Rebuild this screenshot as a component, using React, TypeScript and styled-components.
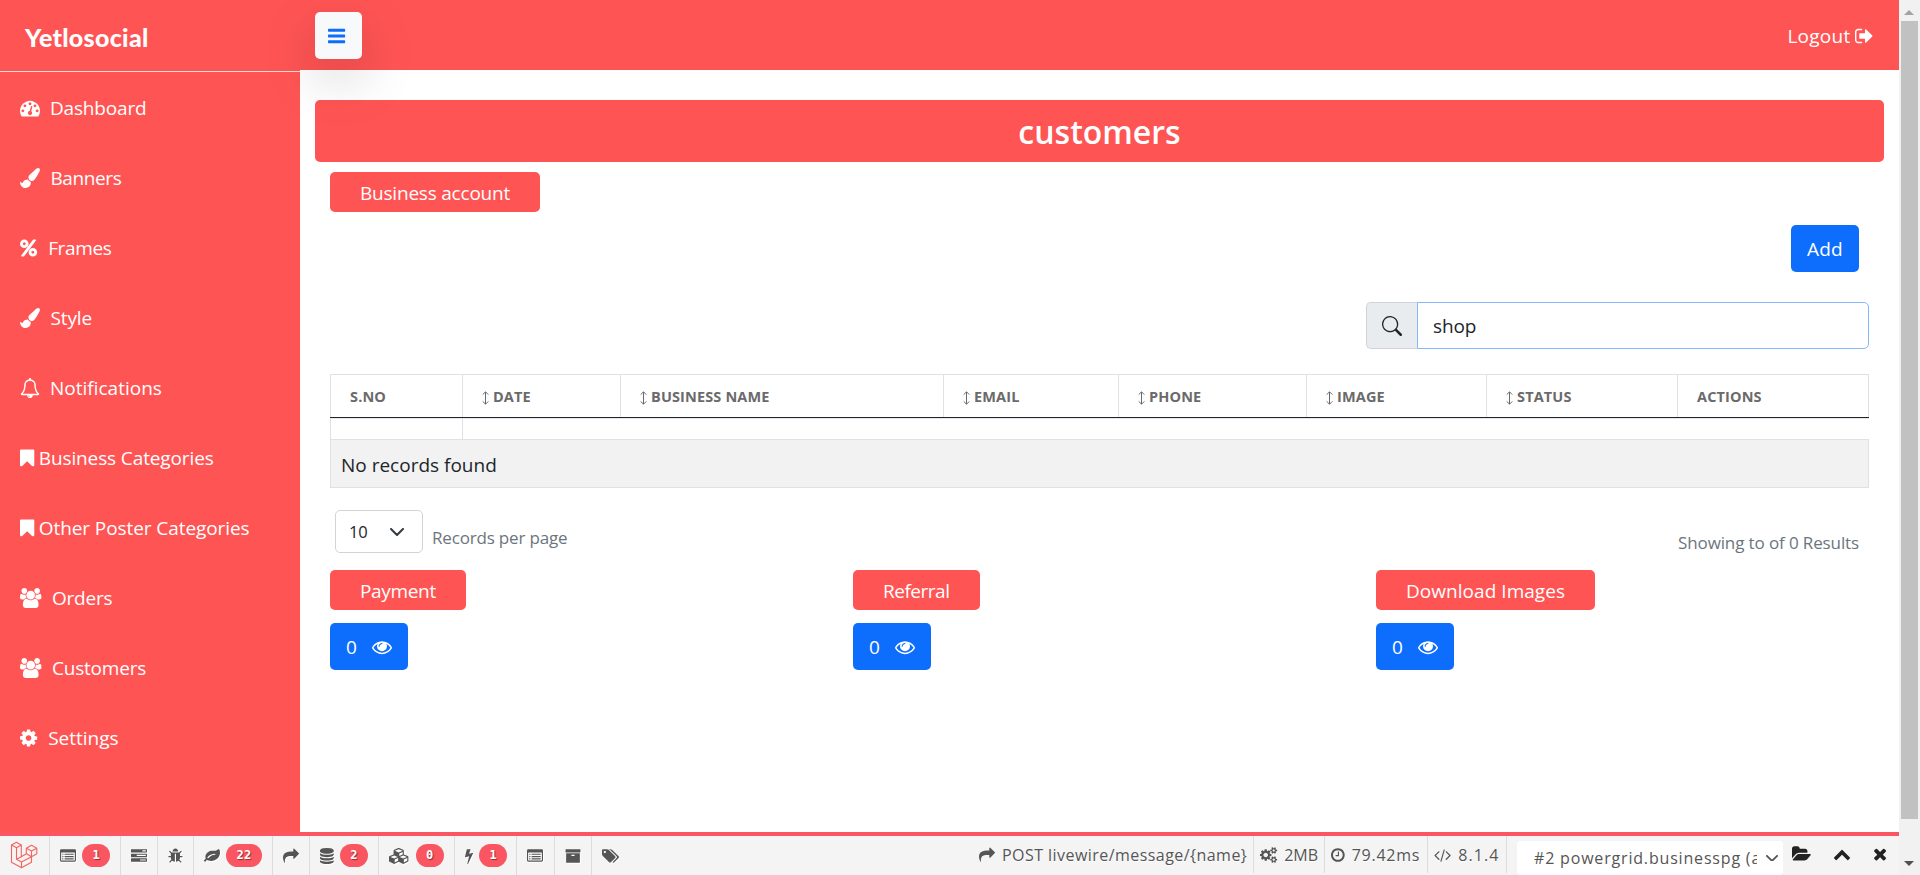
import React from "react";
import styled, { createGlobalStyle } from "styled-components";

const RED = "#ff5454";
const BLUE = "#0d6efd";
const LINE = "#dee2e6";
const SANS = '"Open Sans", "Noto Sans", sans-serif';

const GlobalStyle = createGlobalStyle`
  *, *::before, *::after { box-sizing: border-box; }
  html, body { margin: 0; padding: 0; overflow: hidden; background: #fff; }
  body { font-family: ${SANS}; font-size: 19px; line-height: 30px; color: #212529; }
  button, input { font: inherit; letter-spacing: inherit; }
`;

/* ---------- icons ---------- */

type Glyph = { x?: number; w: number; d: string };

const REPEAT_BOX = "q0-13 9.5-22.5t22.5-9.5h960q13 0 22.5 9.5t9.5 22.5z";

const glyphs = {
  bars: {
    x: 128,
    w: 1536,
    d: "M1664 1344v128q0 26-19 45t-45 19h-1408q-26 0-45-19t-19-45v-128q0-26 19-45t45-19h1408q26 0 45 19t19 45zm0-512v128q0 26-19 45t-45 19h-1408q-26 0-45-19t-19-45v-128q0-26 19-45t45-19h1408q26 0 45 19t19 45zm0-512v128q0 26-19 45t-45 19h-1408q-26 0-45-19t-19-45v-128q0-26 19-45t45-19h1408q26 0 45 19t19 45z",
  },
  dashboard: {
    w: 1792,
    d: "M384 1152q0-53-37.5-90.5t-90.5-37.5-90.5 37.5-37.5 90.5 37.5 90.5 90.5 37.5 90.5-37.5 37.5-90.5zm192-448q0-53-37.5-90.5t-90.5-37.5-90.5 37.5-37.5 90.5 37.5 90.5 90.5 37.5 90.5-37.5 37.5-90.5zm428 481l101-382q6-26-7.5-48.5t-38.5-29.5-48 6.5-30 39.5l-101 382q-60 5-107 43.5t-63 98.5q-20 77 20 146t117 89 146-20 89-117q16-60-6-117t-72-91zm660-33q0-53-37.5-90.5t-90.5-37.5-90.5 37.5-37.5 90.5 37.5 90.5 90.5 37.5 90.5-37.5 37.5-90.5zm-640-640q0-53-37.5-90.5t-90.5-37.5-90.5 37.5-37.5 90.5 37.5 90.5 90.5 37.5 90.5-37.5 37.5-90.5zm448 192q0-53-37.5-90.5t-90.5-37.5-90.5 37.5-37.5 90.5 37.5 90.5 90.5 37.5 90.5-37.5 37.5-90.5zm320 448q0 261-141 483-19 29-54 29h-1402q-35 0-54-29-141-221-141-483 0-182 71-348t191-286 286-191 348-71 348 71 286 191 191 286 71 348z",
  },
  brush: {
    w: 1792,
    d: "M1615 0q70 0 122.5 46.5t52.5 116.5q0 63-45 151-332 629-465 752-97 91-218 91-126 0-216.5-92.5t-90.5-219.5q0-128 92-212l638-579q59-54 130-54zm-909 1034q39 76 106.5 130t150.5 76l1 71q4 213-129.5 347t-348.5 134q-123 0-218-46.5t-152.5-127.5-86.5-183-29-220q7 5 41 30t62 44.5 59 36.5 46 17q41 0 55-37 25-66 57.5-112.5t69.5-76 88-47.5 103-25.5 125-10.5z",
  },
  percent: {
    w: 1536,
    d: "M1280 1280q0-52-38-90t-90-38-90 38-38 90 38 90 90 38 90-38 38-90zm-768-768q0-52-38-90t-90-38-90 38-38 90 38 90 90 38 90-38 38-90zm1024 768q0 159-112.5 271.5t-271.5 112.5-271.5-112.5-112.5-271.5 112.5-271.5 271.5-112.5 271.5 112.5 112.5 271.5zm-96-1088q0 20-13 38l-1056 1408q-19 26-51 26h-160q-26 0-45-19t-19-45q0-20 13-38l1056-1408q19-26 51-26h160q26 0 45 19t19 45zm-672 320q0 159-112.5 271.5t-271.5 112.5-271.5-112.5-112.5-271.5 112.5-271.5 271.5-112.5 271.5 112.5 112.5 271.5z",
  },
  bell: {
    w: 1792,
    d: "M912 1696q0-16-16-16-59 0-101.5-42.5t-42.5-101.5q0-16-16-16t-16 16q0 73 51.5 124.5t124.5 51.5q16 0 16-16zm-666-288h1300q-266-300-266-832 0-51-24-105t-69-103-121.5-80.5-169.5-31.5-169.5 31.5-121.5 80.5-69 103-24 105q0 532-266 832zm1482 0q0 52-38 90t-90 38h-448q0 106-75 181t-181 75-181-75-75-181h-448q-52 0-90-38t-38-90q50-42 91-88t85-119.5 74.5-158.5 50-206 19.5-260q0-152 117-282.5t307-158.5q-8-19-8-39 0-40 28-68t68-28 68 28 28 68q0 20-8 39 190 28 307 158.5t117 282.5q0 139 19.5 260t50 206 74.5 158.5 85 119.5 91 88z",
  },
  bookmark: {
    x: 256,
    w: 1280,
    d: "M1420 128q23 0 44 9 33 13 52.5 41t19.5 62v1289q0 34-19.5 62t-52.5 41q-19 8-44 8-48 0-83-32l-441-424-441 424q-36 33-83 33-23 0-44-9-33-13-52.5-41t-19.5-62v-1289q0-34 19.5-62t52.5-41q21-9 44-9h1048z",
  },
  users: {
    w: 1920,
    d: "M593 896q-162 5-265 128h-134q-82 0-138-40.5t-56-118.5q0-353 124-353 6 0 43.5 21t97.5 42.5 119 21.5q67 0 133-23-5 37-5 66 0 139 81 256zm1071 637q0 120-73 189.5t-194 69.5h-874q-121 0-194-69.5t-73-189.5q0-53 3.5-103.5t14-109 26.5-108.5 43-97.5 62-81 85.5-53.5 111.5-20q10 0 43 21.5t73 48 107 48 135 21.5 135-21.5 107-48 73-48 43-21.5q61 0 111.5 20t85.5 53.5 62 81 43 97.5 26.5 108.5 14 109 3.5 103.5zm-1024-1277q0 106-75 181t-181 75-181-75-75-181 75-181 181-75 181 75 75 181zm704 384q0 159-112.5 271.5t-271.5 112.5-271.5-112.5-112.5-271.5 112.5-271.5 271.5-112.5 271.5 112.5 112.5 271.5zm576 225q0 78-56 118.5t-138 40.5h-134q-103-123-265-128 81-117 81-256 0-29-5-66 66 23 133 23 59 0 119-21.5t97.5-42.5 43.5-21q124 0 124 353zm-128-609q0 106-75 181t-181 75-181-75-75-181 75-181 181-75 181 75 75 181z",
  },
  cog: {
    x: 128,
    w: 1536,
    d: "M1152 896q0-106-75-181t-181-75-181 75-75 181 75 181 181 75 181-75 75-181zm512-109v222q0 12-8 23t-20 13l-185 28q-19 54-39 91 35 50 107 138 10 12 10 25t-9 23q-27 37-99 108t-94 71q-12 0-26-9l-138-108q-44 23-91 38-16 136-29 186-7 28-36 28h-222q-14 0-24.5-8.5t-11.5-21.5l-28-184q-49-16-90-37l-141 107q-10 9-25 9-14 0-25-11-126-114-165-168-7-10-7-23 0-12 8-23 15-21 51-66.5t54-70.5q-27-50-41-99l-183-27q-13-2-21-12.5t-8-23.5v-222q0-12 8-23t19-13l186-28q14-46 39-92-40-57-107-138-10-12-10-24 0-10 9-23 26-36 98.5-107.5t94.5-71.5q13 0 26 10l138 107q44-23 91-38 16-136 29-186 7-28 36-28h222q14 0 24.5 8.5t11.5 21.5l28 184q49 16 90 37l142-107q9-9 24-9 13 0 25 10 129 119 165 170 7 8 7 22 0 12-8 23-15 21-51 66.5t-54 70.5q26 50 41 98l183 28q13 2 21 12.5t8 23.5z",
  },
  signOut: {
    x: 64,
    w: 1664,
    d: "M704 1440q0 4 1 20t.5 26.5-3 23.5-10 19.5-20.5 6.5h-320q-119 0-203.5-84.5t-84.5-203.5v-704q0-119 84.5-203.5t203.5-84.5h320q13 0 22.5 9.5t9.5 22.5q0 4 1 20t.5 26.5-3 23.5-10 19.5-20.5 6.5h-320q-66 0-113 47t-47 113v704q0 66 47 113t113 47h312l11.5 1 11.5 3 8 5.5 7 9 2 13.5zm928-544q0 26-19 45l-544 544q-19 19-45 19t-45-19-19-45v-288h-448q-26 0-45-19t-19-45v-384q0-26 19-45t45-19h448v-288q0-26 19-45t45-19 45 19l544 544q19 19 19 45z",
  },
  eye: {
    w: 1792,
    d: "M1664 960q-152-236-381-353 61 104 61 225 0 185-131.5 316.5t-316.5 131.5-316.5-131.5-131.5-316.5q0-121 61-225-229 117-381 353 133 205 333.5 326.5t434.5 121.5 434.5-121.5 333.5-326.5zm-720-384q0-20-14-34t-34-14q-125 0-214.5 89.5t-89.5 214.5q0 20 14 34t34 14 34-14 14-34q0-86 61-147t147-61q20 0 34-14t14-34zm848 384q0 34-20 69-140 230-376.5 368.5t-499.5 138.5-499.5-139-376.5-368q-20-35-20-69t20-69q140-229 376.5-368t499.5-139 499.5 139 376.5 368q20 35 20 69z",
  },
  listAlt: {
    w: 1792,
    d: `M384 1184v64q0 13-9.5 22.5t-22.5 9.5h-64q-13 0-22.5-9.5t-9.5-22.5v-64q0-13 9.5-22.5t22.5-9.5h64q13 0 22.5 9.5t9.5 22.5zm0-256v64q0 13-9.5 22.5t-22.5 9.5h-64q-13 0-22.5-9.5t-9.5-22.5v-64q0-13 9.5-22.5t22.5-9.5h64q13 0 22.5 9.5t9.5 22.5zm0-256v64q0 13-9.5 22.5t-22.5 9.5h-64q-13 0-22.5-9.5t-9.5-22.5v-64q0-13 9.5-22.5t22.5-9.5h64q13 0 22.5 9.5t9.5 22.5zm1152 512v64q0 13-9.5 22.5t-22.5 9.5h-960q-13 0-22.5-9.5t-9.5-22.5v-64${REPEAT_BOX}m0-256v64q0 13-9.5 22.5t-22.5 9.5h-960q-13 0-22.5-9.5t-9.5-22.5v-64${REPEAT_BOX}m0-256v64q0 13-9.5 22.5t-22.5 9.5h-960q-13 0-22.5-9.5t-9.5-22.5v-64${REPEAT_BOX}m128 704v-832q0-13-9.5-22.5t-22.5-9.5h-1472q-13 0-22.5 9.5t-9.5 22.5v832q0 13 9.5 22.5t22.5 9.5h1472q13 0 22.5-9.5t9.5-22.5zm128-1088v1088q0 66-47 113t-113 47h-1472q-66 0-113-47t-47-113v-1088q0-66 47-113t113-47h1472q66 0 113 47t47 113z`,
  },
  tasks: {
    w: 1792,
    d: "M1024 1408h640v-128h-640v128zm-384-512h1024v-128h-1024v128zm640-512h384v-128h-384v128zm512 832v256q0 26-19 45t-45 19h-1664q-26 0-45-19t-19-45v-256q0-26 19-45t45-19h1664q26 0 45 19t19 45zm0-512v256q0 26-19 45t-45 19h-1664q-26 0-45-19t-19-45v-256q0-26 19-45t45-19h1664q26 0 45 19t19 45zm0-512v256q0 26-19 45t-45 19h-1664q-26 0-45-19t-19-45v-256q0-26 19-45t45-19h1664q26 0 45 19t19 45z",
  },
  bug: {
    x: 64,
    w: 1664,
    d: "M1696 960q0 26-19 45t-45 19h-224q0 171-67 290l208 209q19 19 19 45t-19 45q-18 19-45 19t-45-19l-198-197q-5 5-15 13t-42 28.5-65 36.5-82 29-97 13v-896h-128v896q-51 0-101.5-13.5t-87-33-66-39-43.5-32.5l-15-14-183 207q-20 21-48 21-24 0-43-16-19-18-20.5-44.5t15.5-46.5l202-227q-58-114-58-274h-224q-26 0-45-19t-19-45 19-45 45-19h224v-294l-173-173q-19-19-19-45t19-45 45-19 45 19l173 173h844l173-173q19-19 45-19t45 19 19 45-19 45l-173 173v294h224q26 0 45 19t19 45zm-480-576h-640q0-133 93.5-226.5t226.5-93.5 226.5 93.5 93.5 226.5z",
  },
  leaf: {
    w: 1792,
    d: "M1280 704q0-26-19-45t-45-19q-172 0-318 49.5t-259.5 134-235.5 219.5q-19 21-19 45 0 26 19 45t45 19q24 0 45-19 27-24 74-71t67-66q137-124 268.5-176t313.5-52q26 0 45-19t19-45zm512-198q0 95-20 193-46 224-184.5 383t-357.5 268q-214 108-438 108-148 0-286-47-15-5-88-42t-96-37q-16 0-39.5 32t-45 70-52.5 70-60 32q-43 0-63.5-17.5t-45.5-59.5q-2-4-6-11t-5.5-10-3-9.5-1.5-13.5q0-35 31-73.5t68-65.5 68-56 31-48q0-4-14-38t-16-44q-9-51-9-104 0-115 43.5-220t119-184.5 170.5-139 204-95.5q55-18 145-25.5t179.5-9 178.5-6 163.5-24 113.5-56.5l29.5-29.5 29.5-28 27-20 36.5-16 43.5-4.5q39 0 70.5 46t47.5 112 24 124 8 96z",
  },
  share: {
    w: 1792,
    d: "M1792 640q0 26-19 45l-512 512q-19 19-45 19t-45-19-19-45v-256h-224q-98 0-175.5 6t-154 21.5-133 42.5-105.5 69.5-80 101-48.5 138.5-17.5 181q0 55 5 123 0 6 2.5 23.5t2.5 26.5q0 15-8.5 25t-23.5 10q-16 0-28-17-7-9-13-22t-13.5-30-10.5-24q-127-285-127-451 0-199 53-333 162-403 875-403h224v-256q0-26 19-45t45-19 45 19l512 512q19 19 19 45z",
  },
  database: {
    x: 128,
    w: 1536,
    d: "M896 768q237 0 443-43t325-127v170q0 69-103 128t-280 93.5-385 34.5-385-34.5-280-93.5-103-128v-170q119 84 325 127t443 43zm0 768q237 0 443-43t325-127v170q0 69-103 128t-280 93.5-385 34.5-385-34.5-280-93.5-103-128v-170q119 84 325 127t443 43zm0-384q237 0 443-43t325-127v170q0 69-103 128t-280 93.5-385 34.5-385-34.5-280-93.5-103-128v-170q119 84 325 127t443 43zm0-1152q208 0 385 34.5t280 93.5 103 128v128q0 69-103 128t-280 93.5-385 34.5-385-34.5-280-93.5-103-128v-128q0-69 103-128t280-93.5 385-34.5z",
  },
  cubes: {
    w: 2304,
    d: "M640 1632l384-192v-314l-384 164v342zm-64-454l404-173-404-173-404 173zm1088 454l384-192v-314l-384 164v342zm-64-454l404-173-404-173-404 173zm-448-293l384-165v-266l-384 164v267zm-64-379l441-189-441-189-441 189zm1088 518v416q0 36-19 67t-52 47l-448 224q-25 14-57 14t-57-14l-448-224q-4-2-7-4-2 2-7 4l-448 224q-25 14-57 14t-57-14l-448-224q-33-16-52-47t-19-67v-416q0-38 21.5-70t56.5-48l434-186v-400q0-38 21.5-70t56.5-48l448-192q23-10 50-10t50 10l448 192q35 16 56.5 48t21.5 70v400l434 186q36 16 57 48t21 70z",
  },
  bolt: {
    x: 448,
    w: 896,
    d: "M1333 566q18 20 7 44l-540 1157q-13 25-42 25-4 0-14-2-17-5-25.5-19t-4.5-30l197-808-406 101q-4 1-12 1-18 0-31-11-18-15-13-39l201-825q4-14 16-23t28-9h328q19 0 32 12.5t13 29.5q0 8-5 18l-171 463 396-98q8-2 12-2 19 0 34 15z",
  },
  archive: {
    w: 1792,
    d: "M1088 832q0-26-19-45t-45-19h-256q-26 0-45 19t-19 45 19 45 45 19h256q26 0 45-19t19-45zm576-192v960q0 26-19 45t-45 19h-1408q-26 0-45-19t-19-45v-960q0-26 19-45t45-19h1408q26 0 45 19t19 45zm64-448v256q0 26-19 45t-45 19h-1536q-26 0-45-19t-19-45v-256q0-26 19-45t45-19h1536q26 0 45 19t19 45z",
  },
  tags: {
    w: 1920,
    d: "M448 448q0-53-37.5-90.5t-90.5-37.5-90.5 37.5-37.5 90.5 37.5 90.5 90.5 37.5 90.5-37.5 37.5-90.5zm1067 576q0 53-37 90l-491 492q-39 37-91 37-53 0-90-37l-715-716q-38-37-64.5-101t-26.5-117v-416q0-52 38-90t90-38h416q53 0 117 26.5t102 64.5l715 714q37 39 37 91zm384 0q0 53-37 90l-491 492q-39 37-91 37-36 0-59-14t-53-45l470-470q37-37 37-90 0-52-37-91l-715-714q-38-38-102-64.5t-117-26.5h224q53 0 117 26.5t102 64.5l715 714q37 39 37 91z",
  },
  cogs: {
    w: 1920,
    d: "M896 896q0-106-75-181t-181-75-181 75-75 181 75 181 181 75 181-75 75-181zm768 512q0-52-38-90t-90-38-90 38-38 90q0 53 37.5 90.5t90.5 37.5 90.5-37.5 37.5-90.5zm0-1024q0-52-38-90t-90-38-90 38-38 90q0 53 37.5 90.5t90.5 37.5 90.5-37.5 37.5-90.5zm-384 421v185q0 10-7 19.5t-16 10.5l-155 24q-11 35-32 76 34 48 90 115 7 11 7 20 0 12-7 19-23 30-82.5 89.5t-78.5 59.5q-11 0-21-7l-115-90q-37 19-77 31-11 108-23 155-7 24-30 24h-186q-11 0-20-7.5t-10-17.5l-23-153q-34-10-75-31l-118 89q-7 7-20 7-11 0-21-8-144-133-144-160 0-9 7-19 10-14 41-53t47-61q-23-44-35-82l-152-24q-10-1-17-9.5t-7-19.5v-185q0-10 7-19.5t16-10.5l155-24q11-35 32-76-34-48-90-115-7-11-7-20 0-12 7-20 22-30 82-89t79-59q11 0 21 7l115 90q34-18 77-32 11-108 23-154 7-24 30-24h186q11 0 20 7.5t10 17.5l23 153q34 10 75 31l118-89q8-7 20-7 11 0 21 8 144 133 144 160 0 8-7 19-12 16-42 54t-45 60q23 48 34 82l152 23q10 2 17 10.5t7 19.5zm640 533v140q0 16-149 31-12 27-30 52 51 113 51 138 0 4-4 7-122 71-124 71-8 0-46-47t-52-68q-20 2-30 2t-30-2q-14 21-52 68t-46 47q-2 0-124-71-4-3-4-7 0-25 51-138-18-25-30-52-149-15-149-31v-140q0-16 149-31 13-29 30-52-51-113-51-138 0-4 4-7 4-2 35-20t59-34 30-16q8 0 46 46.5t52 67.5q20-2 30-2t30 2q51-71 92-112l6-2q4 0 124 70 4 3 4 7 0 25-51 138 17 23 30 52 149 15 149 31zm0-1024v140q0 16-149 31-12 27-30 52 51 113 51 138 0 4-4 7-122 71-124 71-8 0-46-47t-52-68q-20 2-30 2t-30-2q-14 21-52 68t-46 47q-2 0-124-71-4-3-4-7 0-25 51-138-18-25-30-52-149-15-149-31v-140q0-16 149-31 13-29 30-52-51-113-51-138 0-4 4-7 4-2 35-20t59-34 30-16q8 0 46 46.5t52 67.5q20-2 30-2t30 2q51-71 92-112l6-2q4 0 124 70 4 3 4 7 0 25-51 138 17 23 30 52 149 15 149 31z",
  },
  clock: {
    x: 128,
    w: 1536,
    d: "M1024 544v448q0 14-9 23t-23 9h-320q-14 0-23-9t-9-23v-64q0-14 9-23t23-9h224v-352q0-14 9-23t23-9h64q14 0 23 9t9 23zm416 352q0-148-73-273t-198-198-273-73-273 73-198 198-73 273 73 273 198 198 273 73 273-73 198-198 73-273zm224 0q0 209-103 385.5t-279.5 279.5-385.5 103-385.5-103-279.5-279.5-103-385.5 103-385.5 279.5-279.5 385.5-103 385.5 103 279.5 279.5 103 385.5z",
  },
  code: {
    w: 1920,
    d: "M617 1399l-50 50q-10 10-23 10t-23-10l-466-466q-10-10-10-23t10-23l466-466q10-10 23-10t23 10l50 50q10 10 10 23t-10 23l-393 393 393 393q10 10 10 23t-10 23zm591-1067l-373 1291q-4 13-15.5 19.5t-23.5 2.5l-62-17q-13-4-19.5-15.5t-2.5-24.5l373-1291q4-13 15.5-19.5t23.5-2.5l62 17q13 4 19.5 15.5t2.5 24.5zm657 651l-466 466q-10 10-23 10t-23-10l-50-50q-10-10-10-23t10-23l393-393-393-393q-10-10-10-23t10-23l50-50q10-10 23-10t23 10l466 466q10 10 10 23t-10 23z",
  },
  folderOpen: {
    w: 1920,
    d: "M1879 952q0 31-31 66l-336 396q-43 51-120.5 86.5t-143.5 35.5h-1088q-34 0-60.5-13t-26.5-43q0-31 31-66l336-396q43-51 120.5-86.5t143.5-35.5h1088q34 0 60.5 13t26.5 43zm-343-344v160h-832q-94 0-197 47.5t-164 119.5l-337 396-5 6q0-4-.5-12.5t-.5-12.5v-960q0-92 66-158t158-66h320q92 0 158 66t66 158v32h544q92 0 158 66t66 158z",
  },
  chevronUp: {
    w: 1792,
    d: "M1683 1331l-166 165q-19 19-45 19t-45-19l-531-531-531 531q-19 19-45 19t-45-19l-166-165q-19-19-19-45.5t19-45.5l742-741q19-19 45-19t45 19l742 741q19 19 19 45.5t-19 45.5z",
  },
  times: {
    x: 192,
    w: 1408,
    d: "M1490 1322q0 40-28 68l-136 136q-28 28-68 28t-68-28l-294-294-294 294q-28 28-68 28t-68-28l-136-136q-28-28-28-68t28-68l294-294-294-294q-28-28-28-68t28-68l136-136q28-28 68-28t68 28l294 294 294-294q28-28 68-28t68 28l136 136q28 28 28 68t-28 68l-294 294 294 294q28 28 28 68z",
  },
} satisfies Record<string, Glyph>;

type IconName = keyof typeof glyphs;

const IconSvg = styled.svg`
  display: block;
  flex: none;
  fill: currentColor;
  overflow: visible;
`;

function Icon({ name, size = 20 }: { name: IconName; size?: number }) {
  const g: Glyph = glyphs[name];
  return (
    <IconSvg
      width={(g.w / 1792) * size}
      height={size}
      viewBox={`${g.x ?? 0} 0 ${g.w} 1792`}
      aria-hidden="true"
    >
      <path d={g.d} />
    </IconSvg>
  );
}

/* ---------- page frame ---------- */

const Page = styled.div`
  display: grid;
  grid-template-columns: 1899px 21px;
  height: 875px;
  width: 1920px;
  overflow: hidden;
`;

const Site = styled.div`
  display: grid;
  grid-template-rows: 832px 43px;
  min-width: 0;
`;

const Body = styled.div`
  display: grid;
  grid-template-columns: 300px 1599px;
`;

/* ---------- sidebar ---------- */

const Sidebar = styled.aside`
  background: ${RED};
  color: #fff;
`;

const Brand = styled.div`
  height: 72px;
  padding: 2px 0 0 25px;
  display: flex;
  align-items: center;
  border-bottom: 1px solid #ffd9d9;
  font-family: Lato, sans-serif;
  font-weight: 900;
  font-size: 25px;
  letter-spacing: 0.3px;
`;

const NavItem = styled.a<{ $gap: number; $spacing: number }>`
  height: 70px;
  padding: 1px 0 0 20px;
  display: flex;
  align-items: center;
  gap: ${(p) => p.$gap}px;
  letter-spacing: ${(p) => p.$spacing}px;
  white-space: nowrap;

  svg {
    margin-top: 1px;
  }
`;

/* ---------- content ---------- */

const Content = styled.main`
  background: #fff;
`;

const Navbar = styled.header`
  height: 70px;
  background: ${RED};
  color: #fff;
  padding: 0 25px 0 15px;
  display: flex;
  align-items: center;
  justify-content: space-between;
`;

const ToggleButton = styled.button`
  position: relative;
  width: 47px;
  height: 47px;
  margin-top: 1px;
  padding: 0 3px 0 0;
  border: 0;
  border-radius: 5px;
  background: #f8f9fa;
  color: ${BLUE};
  display: flex;
  align-items: center;
  justify-content: center;
  box-shadow: 0 19px 54px rgba(0, 0, 0, 0.185);
  z-index: 1;
`;

const Logout = styled.a`
  display: flex;
  align-items: center;
  gap: 5px;
  padding-top: 2px;
  letter-spacing: 0.25px;
`;

const PageTitle = styled.h2`
  margin: 30px 15px 0;
  height: 62px;
  border-radius: 5px;
  background: ${RED};
  color: #fff;
  font-weight: 600;
  font-size: 32px;
  line-height: 64px;
  text-align: center;
`;

const Panel = styled.section`
  padding: 10px 30px 0;
`;

const Tag = styled.span<{ $spacing: number }>`
  display: inline-flex;
  align-items: center;
  height: 40px;
  padding: 1px 30px 0;
  border-radius: 5px;
  background: ${RED};
  color: #fff;
  letter-spacing: ${(p) => p.$spacing}px;
  white-space: nowrap;
`;

const BlueButton = styled.button`
  display: inline-flex;
  align-items: center;
  height: 47px;
  padding: 1px 16px 0;
  border: 0;
  border-radius: 5px;
  background: ${BLUE};
  color: #fff;
  gap: 15px;
`;

const AddButton = styled(BlueButton)`
  width: 68px;
  justify-content: center;
  padding: 1px 0 0;
  letter-spacing: 0.2px;
`;

const AddRow = styled.div`
  display: flex;
  justify-content: flex-end;
  padding: 13px 10px 0 0;
`;

const SearchRow = styled.div`
  display: flex;
  justify-content: flex-end;
  padding-top: 30px;
`;

const SearchBadge = styled.span`
  width: 51px;
  height: 47px;
  border: 1px solid #ced4da;
  border-right: 0;
  border-radius: 5px 0 0 5px;
  background: #e9ecef;
  display: flex;
  align-items: center;
  justify-content: center;
  color: #212529;
`;

const SearchInput = styled.input`
  width: 452px;
  height: 47px;
  border: 1px solid #86b7fe;
  border-radius: 0 5px 5px 0;
  padding: 1px 15px 0;
  outline: 0;
  color: #212529;
  letter-spacing: -0.1px;
`;

const Table = styled.div`
  margin-top: 25px;
  width: 1539px;
  border: 1px solid ${LINE};
  border-top: 0;
`;

const HeadRow = styled.div`
  display: grid;
  grid-template-columns: 132px 158px 323px 175px 188px 180px 191px 192px;
  height: 44px;
  margin: 0 -1px;
  border-top: 1px solid ${LINE};
  border-bottom: 1px solid #212529;
`;

const HeadCell = styled.div`
  display: flex;
  align-items: center;
  gap: 4px;
  padding: 1px 0 0 19px;
  border-left: 1px solid ${LINE};
  color: #6b6a6a;
  font-weight: 700;
  font-size: 14.5px;
  letter-spacing: 0.14px;
  white-space: nowrap;

  &:last-child {
    border-right: 1px solid ${LINE};
  }

  svg {
    margin-top: 3px;
  }
`;

const FilterRow = styled.div`
  display: grid;
  grid-template-columns: 132px 1fr;
  height: 22px;
  margin-right: -1px;
  background: #fff;
  border-top: 1px solid #e6e8eb;
  border-bottom: 1px solid ${LINE};
`;

const FilterCell = styled.div`
  border-right: 1px solid ${LINE};

  &:last-child {
    border-right-color: #fff;
  }
`;

const EmptyRow = styled.div`
  height: 47px;
  padding: 3px 10px 0;
  background: #f2f2f2;
  line-height: 44px;
`;

const TableFooter = styled.div`
  display: flex;
  justify-content: space-between;
  padding: 22px 10px 0 5px;
  height: 82px;
  font-size: 17px;
  color: #6c757d;
`;

const PageSize = styled.div`
  display: flex;
  gap: 9px;
`;

const PageSizeSelect = styled.div`
  display: flex;
  align-items: center;
  justify-content: space-between;
  width: 88px;
  height: 43px;
  padding: 1px 18px 0 13px;
  border: 1px solid #ced4da;
  border-radius: 5px;
  color: #212529;
  font-size: 16.5px;
  letter-spacing: -0.2px;
`;

const RecordsLabel = styled.span`
  padding-top: 13px;
  letter-spacing: -0.18px;
`;

const ResultCount = styled.span`
  padding-top: 18px;
  letter-spacing: -0.12px;
`;

const Summaries = styled.div`
  display: grid;
  grid-template-columns: repeat(3, 523px);
`;

const Summary = styled.div`
  display: flex;
  flex-direction: column;
  align-items: flex-start;
  gap: 13px;
`;

/* ---------- debug bar ---------- */

const DebugBar = styled.footer`
  display: flex;
  justify-content: space-between;
  border-top: 4px solid #fa5661;
  background: #f4f4f4;
  color: #555;
  font-size: 16px;
  overflow: hidden;
`;

const DebugGroup = styled.div`
  display: flex;
`;

const DebugTab = styled.div<{ $w: number }>`
  width: ${(p) => p.$w}px;
  height: 39px;
  display: flex;
  align-items: center;
  gap: 6px;
  padding-left: 10px;
  border-right: 1px solid #ddd;

  &:last-child {
    border-right: 0;
  }

  svg {
    filter: drop-shadow(1px 1px 0 #fff);
  }
`;

const LogoCell = styled.div`
  width: 50px;
  height: 39px;
  padding: 5px 0 0 10px;
  border-right: 1px solid #ddd;
`;

const Count = styled.span`
  height: 23px;
  padding: 0 10.5px;
  border-radius: 12px;
  background: #fa5661;
  color: #fff;
  font: 700 12px/23px "DejaVu Sans Mono", monospace;
  letter-spacing: 0.2px;
  text-shadow: 1px 1px 1px rgba(0, 0, 0, 0.45);
`;

const DebugInfo = styled.div<{ $w: number; $spacing?: number }>`
  width: ${(p) => p.$w}px;
  height: 37px;
  display: flex;
  align-items: center;
  gap: 7px;
  padding-left: 6px;
  border-right: 1px solid #ddd;
  letter-spacing: ${(p) => p.$spacing ?? 0.45}px;
  white-space: nowrap;
  text-shadow: 0 1px 0 #fff;
`;

const RequestSelect = styled.div`
  display: flex;
  align-items: center;
  gap: 9px;
  width: 266px;
  height: 34px;
  margin: 5px 0 0 10px;
  padding: 0 5px 0 17px;
  border-radius: 4px;
  background: #fff;
  letter-spacing: 0.82px;
  white-space: nowrap;
`;

const RequestName = styled.span`
  width: 223px;
  overflow: hidden;
`;

const BarActions = styled.div`
  display: flex;
  align-items: center;
  width: 116px;
  padding: 0 0 3px 9px;
  color: #222;
  gap: 22px;
`;

/* ---------- scrollbar ---------- */

const Scrollbar = styled.div`
  display: grid;
  grid-template-rows: 21px 798px 35px 1fr;
  background: #f1f1f1;
  justify-items: center;
  padding-right: 2px;
`;

const Thumb = styled.div`
  grid-row: 2;
  width: 17px;
  background: #c1c1c1;
  margin-left: 1px;
`;

const Arrow = styled.svg<{ $row: number }>`
  grid-row: ${(p) => p.$row};
  align-self: ${(p) => (p.$row === 1 ? "center" : "start")};
  margin: ${(p) => (p.$row === 1 ? "4px" : "7px")} 0 0 1px;
`;

/* ---------- data ---------- */

type NavEntry = { icon: IconName; label: string; gap: number; spacing: number };

const nav: NavEntry[] = [
  { icon: "dashboard", label: "Dashboard", gap: 10, spacing: -0.18 },
  { icon: "brush", label: "Banners", gap: 10.5, spacing: -0.4 },
  { icon: "percent", label: "Frames", gap: 11, spacing: -0.35 },
  { icon: "brush", label: "Style", gap: 10.5, spacing: -0.15 },
  { icon: "bell", label: "Notifications", gap: 10, spacing: 0 },
  { icon: "bookmark", label: "Business Categories", gap: 4.5, spacing: -0.12 },
  { icon: "bookmark", label: "Other Poster Categories", gap: 4.5, spacing: -0.08 },
  { icon: "users", label: "Orders", gap: 10.5, spacing: -0.2 },
  { icon: "users", label: "Customers", gap: 10.5, spacing: -0.2 },
  { icon: "cog", label: "Settings", gap: 11, spacing: 0 },
];

const columns = [
  { label: "S.No", sortable: false },
  { label: "Date", sortable: true },
  { label: "Business Name", sortable: true },
  { label: "Email", sortable: true },
  { label: "Phone", sortable: true },
  { label: "Image", sortable: true },
  { label: "Status", sortable: true },
  { label: "Actions", sortable: false },
];

const summaries = [
  { label: "Payment", spacing: -0.33 },
  { label: "Referral", spacing: -0.48 },
  { label: "Download Images", spacing: 0.04 },
];

const tabs: { icon: IconName; w: number; count?: number }[] = [
  { icon: "listAlt", w: 71, count: 1 },
  { icon: "tasks", w: 37 },
  { icon: "bug", w: 36 },
  { icon: "leaf", w: 79, count: 22 },
  { icon: "share", w: 37 },
  { icon: "database", w: 69, count: 2 },
  { icon: "cubes", w: 76, count: 0 },
  { icon: "bolt", w: 62, count: 1 },
  { icon: "listAlt", w: 38 },
  { icon: "archive", w: 37 },
  { icon: "tags", w: 40 },
];

function SortIcon() {
  return (
    <svg width="7" height="14" viewBox="0 0 7 14" fill="none" stroke="#6b6a6a" strokeWidth="1">
      <path d="M3.5 1v12M.7 3.6 3.5.8l2.8 2.8M.7 10.4l2.8 2.8 2.8-2.8" />
    </svg>
  );
}

function SearchIcon() {
  return (
    <svg width="20" height="20" viewBox="0 0 16 16" fill="currentColor">
      <path d="M11.742 10.344a6.5 6.5 0 1 0-1.397 1.398h-.001c.03.04.062.078.098.115l3.85 3.85a1 1 0 0 0 1.415-1.414l-3.85-3.85a1.007 1.007 0 0 0-.115-.1zM12 6.5a5.5 5.5 0 1 1-11 0 5.5 5.5 0 0 1 11 0z" />
    </svg>
  );
}

function ChevronDown({ width, stroke, color }: { width: number; stroke: number; color: string }) {
  return (
    <svg width={width} height={width * 0.57} viewBox="0 0 14 8" fill="none" stroke={color} strokeWidth={stroke} strokeLinecap="round" strokeLinejoin="round">
      <path d="m1 1 6 6 6-6" />
    </svg>
  );
}

function LaravelLogo() {
  return (
    <svg width="28" height="28" viewBox="0 0 28 28" fill="none" stroke="#f4645f" strokeWidth="1.1" strokeLinejoin="round">
      <path d="M1.5 4v17.2l10 5.6 10-5.6v-5.4l5.3-3V7.2L21.5 4.2l-5.2 3v5.6l-5 2.9V4L6.4 1.2z" />
      <path d="M1.5 4l5 2.8L11.3 4M6.5 6.8v11.4l5 2.9 10-5.3-5-3M6.5 18.2l4.8-2.5M11.5 21.1v5.7M16.3 7.2l5.2 2.9 5.3-2.9M21.5 10.1v5.7" />
    </svg>
  );
}

/* ---------- app ---------- */

export default function App() {
  return (
    <>
      <GlobalStyle />
      <Page>
        <Site>
          <Body>
            <Sidebar>
              <Brand>Yetlosocial</Brand>
              <nav>
                {nav.map((item) => (
                  <NavItem key={item.label} $gap={item.gap} $spacing={item.spacing}>
                    <Icon name={item.icon} />
                    <span>{item.label}</span>
                  </NavItem>
                ))}
              </nav>
            </Sidebar>
            <Content>
              <Navbar>
                <ToggleButton aria-label="Toggle sidebar">
                  <Icon name="bars" />
                </ToggleButton>
                <Logout>
                  Logout <Icon name="signOut" />
                </Logout>
              </Navbar>
              <PageTitle>customers</PageTitle>
              <Panel>
                <Tag $spacing={-0.21}>Business account</Tag>
                <AddRow>
                  <AddButton>Add</AddButton>
                </AddRow>
                <SearchRow>
                  <SearchBadge>
                    <SearchIcon />
                  </SearchBadge>
                  <SearchInput defaultValue="shop" />
                </SearchRow>
                <Table>
                  <HeadRow>
                    {columns.map((c) => (
                      <HeadCell key={c.label}>
                        {c.sortable && <SortIcon />}
                        <span>{c.label.toUpperCase()}</span>
                      </HeadCell>
                    ))}
                  </HeadRow>
                  <FilterRow>
                    <FilterCell />
                    <FilterCell />
                  </FilterRow>
                  <EmptyRow>No records found</EmptyRow>
                </Table>
                <TableFooter>
                  <PageSize>
                    <PageSizeSelect>
                      10
                      <ChevronDown width={14} stroke={2} color="#343a40" />
                    </PageSizeSelect>
                    <RecordsLabel>Records per page</RecordsLabel>
                  </PageSize>
                  <ResultCount>Showing to of 0 Results</ResultCount>
                </TableFooter>
                <Summaries>
                  {summaries.map((s) => (
                    <Summary key={s.label}>
                      <Tag $spacing={s.spacing}>{s.label}</Tag>
                      <BlueButton>
                        0 <Icon name="eye" />
                      </BlueButton>
                    </Summary>
                  ))}
                </Summaries>
              </Panel>
            </Content>
          </Body>
          <DebugBar>
            <DebugGroup>
              <LogoCell>
                <LaravelLogo />
              </LogoCell>
              {tabs.map((t, i) => (
                <DebugTab key={i} $w={t.w}>
                  <Icon name={t.icon} size={16} />
                  {t.count !== undefined && <Count>{t.count}</Count>}
                </DebugTab>
              ))}
            </DebugGroup>
            <DebugGroup>
              <DebugInfo $w={281}>
                <Icon name="share" size={16} />
                POST livewire/message/&#123;name&#125;
              </DebugInfo>
              <DebugInfo $w={71} $spacing={0}>
                <Icon name="cogs" size={16} />
                2MB
              </DebugInfo>
              <DebugInfo $w={103} $spacing={0.75}>
                <Icon name="clock" size={16} />
                79.42ms
              </DebugInfo>
              <DebugInfo $w={79} $spacing={1.1}>
                <Icon name="code" size={16} />
                8.1.4
              </DebugInfo>
              <RequestSelect>
                <RequestName>#2 powergrid.businesspg (ajax)</RequestName>
                <ChevronDown width={12} stroke={2.1} color="#555" />
              </RequestSelect>
              <BarActions>
                <Icon name="folderOpen" size={18} />
                <Icon name="chevronUp" size={18} />
                <Icon name="times" size={18} />
              </BarActions>
            </DebugGroup>
          </DebugBar>
        </Site>
        <Scrollbar>
          <Arrow $row={1} width="10" height="5" viewBox="0 0 10 5">
            <path d="M0 5 5 0l5 5z" fill="#a3a3a3" />
          </Arrow>
          <Thumb />
          <Arrow $row={4} width="10" height="5" viewBox="0 0 10 5">
            <path d="M0 0h10L5 5z" fill="#505050" />
          </Arrow>
        </Scrollbar>
      </Page>
    </>
  );
}
